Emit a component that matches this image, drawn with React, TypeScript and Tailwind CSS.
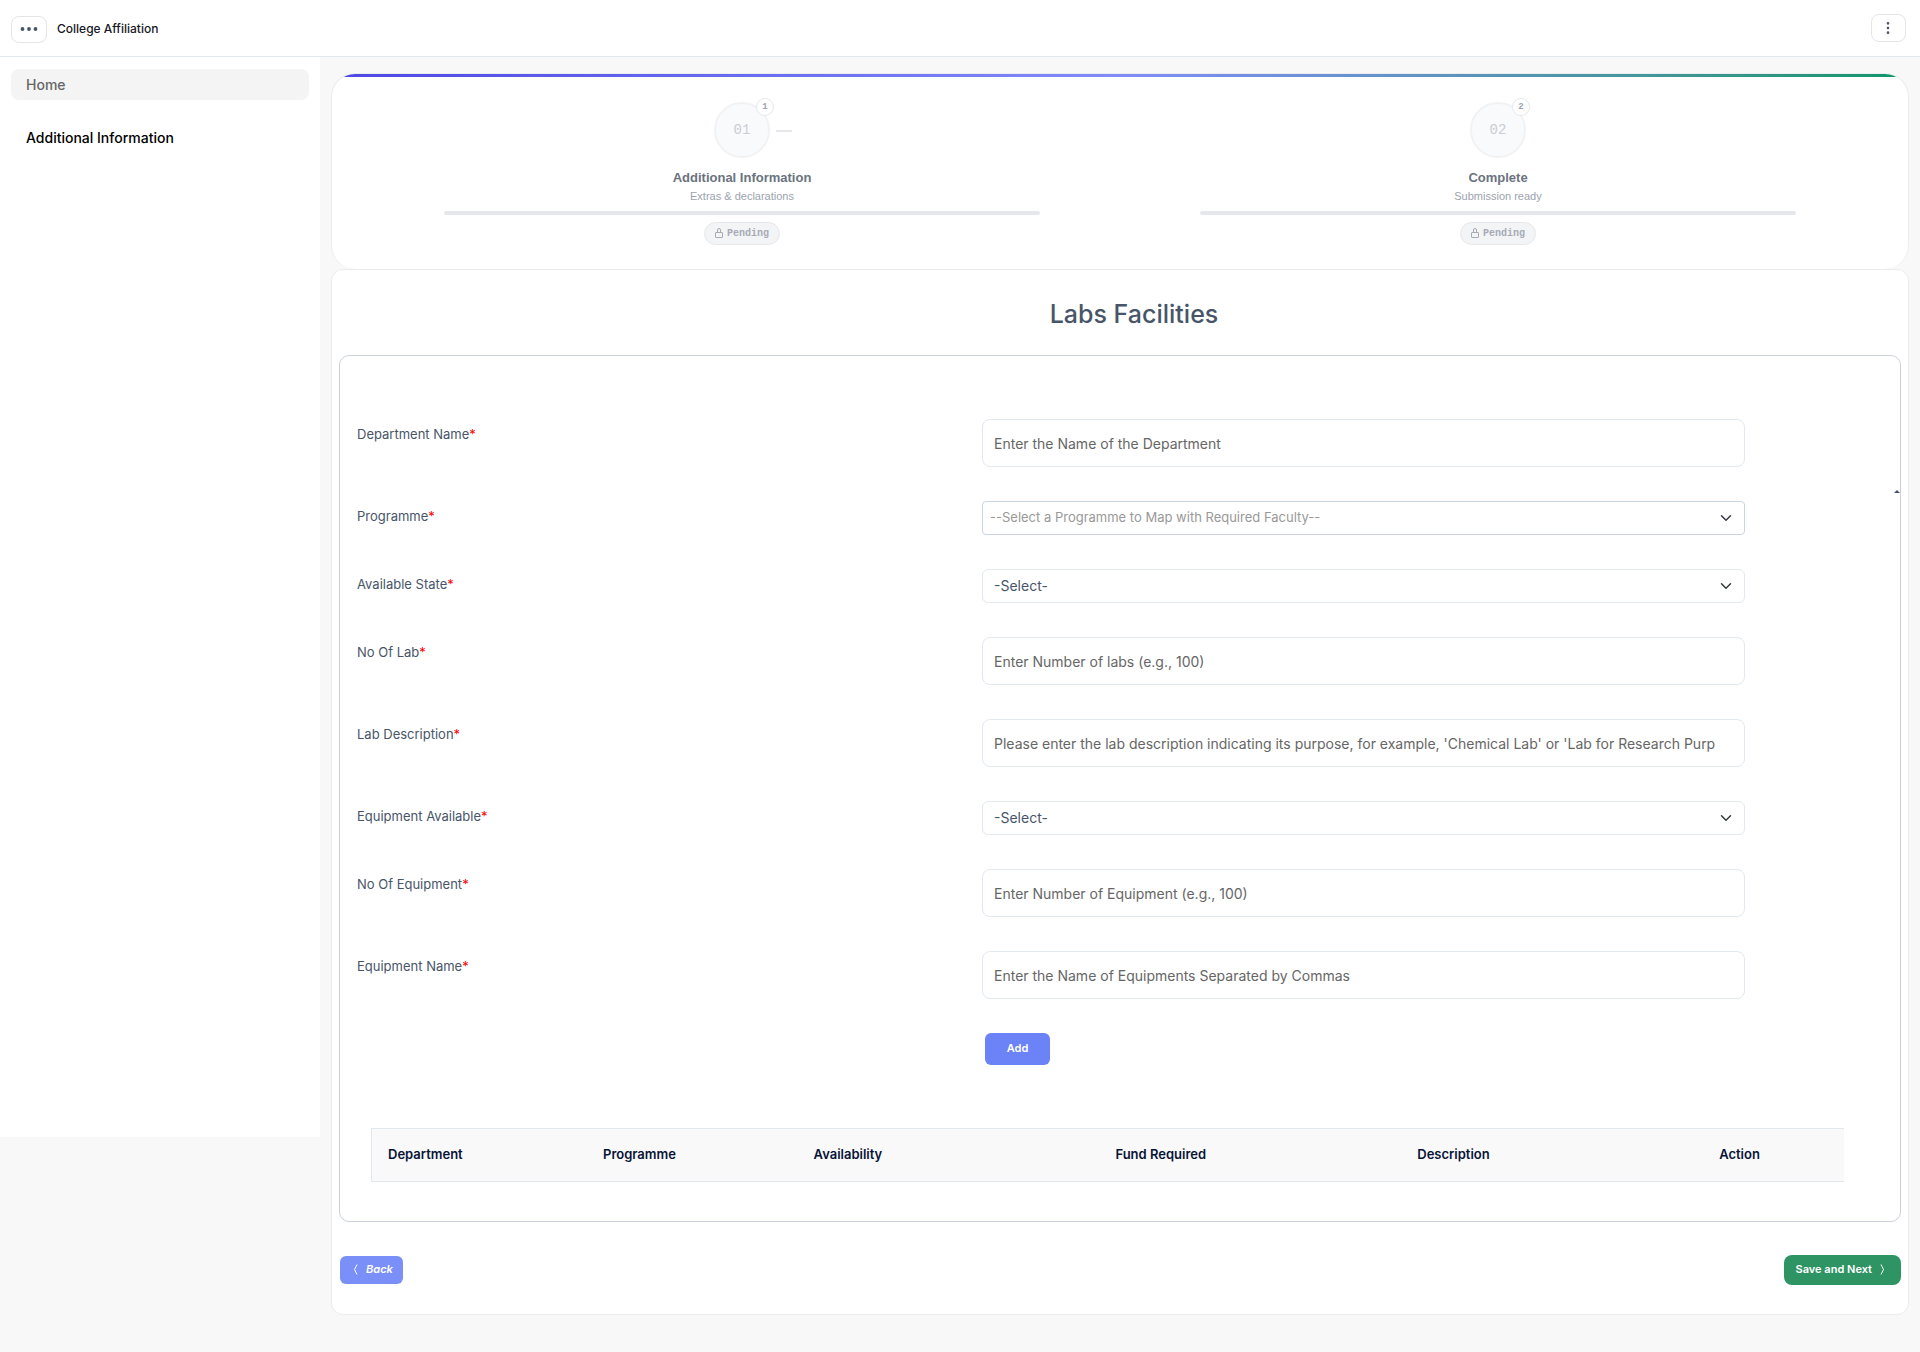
import { EllipsisVertical } from "lucide-react";

const steps = [
    { id: 1, code: "01", title: "Additional Information", note: "Extras & declarations" },
    { id: 2, code: "02", title: "Complete", note: "Submission ready" },
];

type Field = {
    id: string;
    label: string;
    kind: "input" | "select" | "multi";
    text: string;
};

const fields: Field[] = [
    { id: "department", label: "Department Name", kind: "input", text: "Enter the Name of the Department" },
    { id: "programme", label: "Programme", kind: "multi", text: "--Select a Programme to Map with Required Faculty--" },
    { id: "state", label: "Available State", kind: "select", text: "-Select-" },
    { id: "labs", label: "No Of Lab", kind: "input", text: "Enter Number of labs (e.g., 100)" },
    {
        id: "description",
        label: "Lab Description",
        kind: "input",
        text: "Please enter the lab description indicating its purpose, for example, 'Chemical Lab' or 'Lab for Research Purp",
    },
    { id: "available", label: "Equipment Available", kind: "select", text: "-Select-" },
    { id: "equipment", label: "No Of Equipment", kind: "input", text: "Enter Number of Equipment (e.g., 100)" },
    { id: "names", label: "Equipment Name", kind: "input", text: "Enter the Name of Equipments Separated by Commas" },
];

const columns = [
    { name: "Department", width: "w-[14.5%]" },
    { name: "Programme", width: "w-[14.3%]" },
    { name: "Availability", width: "w-[20.5%]" },
    { name: "Fund Required", width: "w-[20.5%]" },
    { name: "Description", width: "w-[20.5%]" },
    { name: "Action", width: "" },
];

function Header() {
    return (
        <header className="flex h-[57px] items-center justify-between border-b border-[#e2e8f0] bg-white pl-[11px] pr-[14px]">
            <div className="flex items-center gap-[10px] pt-0.5">
                <button type="button" aria-label="Toggle menu" className="flex h-[27px] w-9 items-center justify-center rounded-lg border border-[#e5e5e5]">
                    <svg width="18" height="4" viewBox="0 0 18 4" fill="#475569">
                        <circle cx="2.5" cy="2" r="1.9" />
                        <circle cx="9" cy="2" r="1.9" />
                        <circle cx="15.5" cy="2" r="1.9" />
                    </svg>
                </button>
                <span className="text-xs font-medium text-[#171725]">College Affiliation</span>
            </div>
            <button type="button" aria-label="More options" className="flex h-7 w-[35px] items-center justify-center rounded-lg border border-[#e5e5e5] pr-px text-[#475569]">
                <EllipsisVertical size={16} />
            </button>
        </header>
    );
}

function Sidebar() {
    return (
        <nav className="flex h-[1080px] w-80 shrink-0 flex-col gap-6 bg-white px-[11px] py-3">
            <a href="#" className="rounded-lg bg-[#f4f4f4] px-[15px] text-sm font-medium leading-[31px] text-[#666]">
                Home
            </a>
            <a href="#" className="px-[15px] text-sm font-medium leading-[28px] text-black">
                Additional Information
            </a>
        </nav>
    );
}

function Stepper() {
    return (
        <section className="relative overflow-hidden rounded-3xl border border-b-0 border-[#ebecee] bg-white px-8 pb-6 pt-7">
            <div className="absolute inset-x-0 top-0 h-[3px] bg-linear-to-r from-[#4f46e5] via-[#818cf8] to-[#059669]"></div>
            <ol className="flex font-['Liberation_Sans',Arial,sans-serif]">
                {steps.map((step, i) => (
                    <li key={step.id} className="flex flex-1 flex-col items-center px-20">
                        <div className="relative flex h-14 w-14 items-center justify-center rounded-full border-2 border-[#f1f2f4] bg-[#f9fafb] font-['Liberation_Mono',monospace] text-sm text-[#c9cdd4]">
                            {step.code}
                            <span className="absolute -right-[6px] -top-[6px] flex h-[18px] w-[18px] items-center justify-center rounded-full border border-[#e5e7eb] bg-white text-[9px] font-bold text-[#9ca3af]">
                                {step.id}
                            </span>
                            {i < steps.length - 1 && <span className="absolute left-[60px] top-[26px] h-[2px] w-4 bg-[#e5e7eb]"></span>}
                        </div>
                        <h3 className="mt-[11px] text-[13px] font-bold leading-[18px] text-[#6b7280]">{step.title}</h3>
                        <p className="mt-px text-[11px] leading-4 text-[#9ca3af]">{step.note}</p>
                        <div className="mt-[7px] h-1 w-full rounded-full bg-[#e5e7eb]"></div>
                        <span className="mt-[7px] flex h-[23px] items-center gap-1 rounded-full border border-[#e5e7eb] bg-[#f3f4f6] px-[10px] font-['Liberation_Mono',monospace] text-[10px] font-bold text-[#a6abb5]">
                            <svg width="8" height="11" viewBox="0 0 8 11" fill="none" stroke="currentColor">
                                <rect x="0.5" y="4.5" width="7" height="5" rx="0.5" />
                                <path d="M2.5 4.5V2a1.5 1.5 0 0 1 3 0v2.5" />
                            </svg>
                            Pending
                        </span>
                    </li>
                ))}
            </ol>
        </section>
    );
}

function FieldRow({ field }: { field: Field }) {
    const { id, label, kind, text } = field;
    return (
        <div className="grid grid-cols-[625fr_763fr_155fr] items-start">
            <label htmlFor={id} className="pt-[5px] text-[13px] leading-5 text-[#475569]">
                {label}
                <span className="text-[#ff0000]">*</span>
            </label>
            {kind === "input" ? (
                <input
                    id={id}
                    type="text"
                    placeholder={text}
                    className="h-12 w-full rounded-lg border border-[#e2e8f0] px-[11px] text-sm text-[#475569] placeholder:text-[#666]"
                />
            ) : (
                <div className="grid">
                    <select
                        id={id}
                        className={
                            kind === "multi"
                                ? "col-start-1 row-start-1 h-[34px] w-full appearance-none rounded-sm border border-[#cbd5e1] bg-white px-[7px] text-[13px] text-[#999]"
                                : "col-start-1 row-start-1 h-[34px] w-full appearance-none rounded-md border border-[#e2e8f0] bg-white px-[11px] text-sm text-[#475569]"
                        }
                    >
                        <option>{text}</option>
                    </select>
                    <svg
                        width="12"
                        height="12"
                        viewBox="0 0 16 16"
                        fill="none"
                        stroke="#343a40"
                        strokeWidth="2"
                        strokeLinecap="round"
                        strokeLinejoin="round"
                        className="pointer-events-none col-start-1 row-start-1 mr-[13px] self-center justify-self-end"
                    >
                        <path d="m2 5 6 6 6-6" />
                    </svg>
                </div>
            )}
        </div>
    );
}

function App() {
    return (
        <div className="min-h-screen bg-[#f8f8f8] font-[Inter,sans-serif]">
            <Header />
            <div className="flex items-start">
                <Sidebar />
                <main className="min-w-0 flex-1 px-[11px] pb-9 pt-4">
                    <Stepper />
                    <section className="rounded-xl border border-[#ebecee] bg-white px-[7px] pb-[29px]">
                        <h1 className="pb-[23px] pl-7 pt-[27px] text-center text-[25px] font-medium leading-[35px] text-[#475569]">Labs Facilities</h1>
                        <div className="relative rounded-[10px] border border-[#cbd0da] pb-[39px] pl-[17px] pt-[63px]">
                            <span className="absolute right-0 top-[134px] h-0 w-0 border-x-[3px] border-b-[3px] border-x-transparent border-b-[#475569]"></span>
                            <form className="flex flex-col gap-[34px]">
                                {fields.map((field) => (
                                    <FieldRow key={field.id} field={field} />
                                ))}
                                <div className="grid grid-cols-[625fr_918fr]">
                                    <button type="button" className="col-start-2 ml-[3px] h-8 w-[65px] rounded-md bg-[#6c83f7] pb-0.5 text-[11px] font-semibold text-white">
                                        Add
                                    </button>
                                </div>
                            </form>
                            <div className="ml-[14px] mr-14 mt-[63px]">
                                <table className="w-full table-fixed border-y border-l border-[#e2e8f0] bg-[#f9f9f9]">
                                    <thead>
                                        <tr>
                                            {columns.map((col) => (
                                                <th key={col.name} className={`${col.width} h-[53px] px-[18px] text-left text-[13px] font-semibold text-[#071437] first:pl-4`}>
                                                    {col.name}
                                                </th>
                                            ))}
                                        </tr>
                                    </thead>
                                </table>
                            </div>
                        </div>
                        <div className="mt-[33px] flex items-center justify-between">
                            <button type="button" className="ml-px flex h-7 items-center gap-2 rounded-md bg-[#7b8ff9] pb-0.5 pl-[13px] pr-[10px] text-[11px] font-semibold italic text-white">
                                <svg width="5" height="11" viewBox="0 0 5 11" fill="none" stroke="currentColor">
                                    <path d="M4 0.5L1.5 5.5L4 10.5" />
                                </svg>
                                Back
                            </button>
                            <button type="button" className="flex h-[30px] items-center gap-2 rounded-lg bg-[#2f9464] pb-0.5 pl-3 pr-4 text-[11px] font-semibold text-white">
                                Save and Next
                                <svg width="5" height="11" viewBox="0 0 5 11" fill="none" stroke="currentColor">
                                    <path d="M1 0.5L3.5 5.5L1 10.5" />
                                </svg>
                            </button>
                        </div>
                    </section>
                </main>
            </div>
        </div>
    );
}

export default App;
